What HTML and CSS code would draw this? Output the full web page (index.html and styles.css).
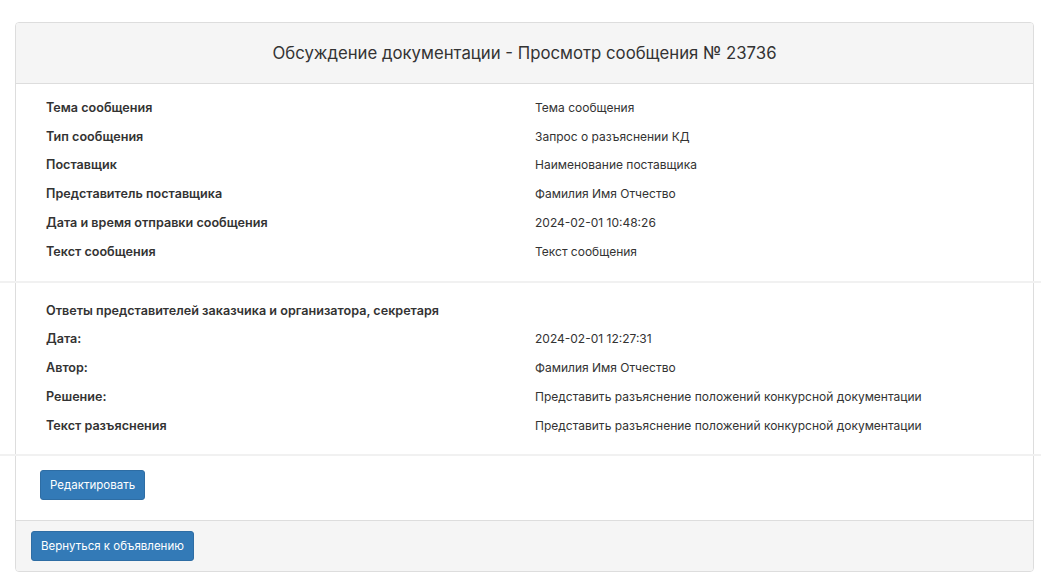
FILE: index.html
```html
<!DOCTYPE html>
<html lang="ru">
<head>
  <meta charset="UTF-8" />
  <meta name="viewport" content="width=device-width, initial-scale=1.0"/>
  <title>Просмотр сообщения № 23736</title>
  <link rel="stylesheet" href="styles.css">
</head>
<body>

  <div class="page">
    <div class="panel">
      <div class="panel-heading">
        <h3 class="panel-title">Обсуждение документации - Просмотр сообщения № 23736</h3>
      </div>

      <div class="panel-section first">
        <div class="info-row"><div class="label">Тема сообщения</div><div class="value">Тема сообщения</div></div>
        <div class="info-row"><div class="label">Тип сообщения</div><div class="value">Запрос о разъяснении КД</div></div>
        <div class="info-row"><div class="label">Поставщик</div><div class="value">Наименование поставщика</div></div>
        <div class="info-row"><div class="label">Представитель поставщика</div><div class="value">Фамилия Имя Отчество</div></div>
        <div class="info-row"><div class="label">Дата и время отправки сообщения</div><div class="value">2024-02-01 10:48:26</div></div>
        <div class="info-row"><div class="label">Текст сообщения</div><div class="value">Текст сообщения</div></div>
      </div>

      <div class="divider"></div>

      <div class="panel-section second">
        <div class="info-row"><div class="label">Ответы представителей заказчика и организатора, секретаря</div></div>
        <div class="info-row"><div class="label">Дата:</div><div class="value">2024-02-01 12:27:31</div></div>
        <div class="info-row"><div class="label">Автор:</div><div class="value">Фамилия Имя Отчество</div></div>
        <div class="info-row"><div class="label">Решение:</div><div class="value">Представить разъяснение положений конкурсной документации</div></div>
        <div class="info-row"><div class="label">Текст разъяснения</div><div class="value">Представить разъяснение положений конкурсной документации</div></div>
      </div>

      <div class="divider"></div>

      <div class="panel-actions">
        <button class="btn">Редактировать</button>
      </div>

      <div class="panel-footer">
        <button class="btn">Вернуться к объявлению</button>
      </div>
    </div>
  </div>

</body>
</html>
```

FILE: styles.css
```css
body {
  margin: 0;
  font-family: Inter, "Noto Sans", sans-serif;
  font-size: 12px;
  color: #333;
  background: #fff;
}

.page {
  padding: 22px 7px 10px 15px;
}

.panel {
  border: 1px solid #ddd;
  border-radius: 4px;
}

.panel-heading {
  background-color: #f5f5f5;
  border-bottom: 1px solid #ddd;
  border-radius: 3px 3px 0 0;
  height: 60px;
  display: flex;
  align-items: center;
  justify-content: center;
}

.panel-title {
  margin: 0;
  font-size: 16.75px;
  font-weight: 400;
  color: #333;
}

.panel-section {
  padding: 0 15px 0 30px;
}

.panel-section.first {
  padding-top: 10px;
  padding-bottom: 15px;
}

.panel-section.second {
  padding-top: 13.5px;
  padding-bottom: 13.5px;
}

.info-row {
  display: grid;
  grid-template-columns: 489px 1fr;
  line-height: 28.7px;
}

.label {
  font-size: 12.6px;
  font-weight: 600;
  white-space: nowrap;
}

.value {
  font-size: 12px;
}

.divider {
  height: 2px;
  background-color: #f1f1f1;
  margin: 0 -8px 0 -16px;
}

.panel-actions {
  padding: 14px 24px 20px;
}

.panel-footer {
  background-color: #f5f5f5;
  border-top: 1px solid #ddd;
  border-radius: 0 0 3px 3px;
  padding: 10px 15px;
}

.btn {
  display: inline-block;
  height: 30px;
  padding: 0 9px;
  font-family: inherit;
  font-size: 11.5px;
  color: #fff;
  background-color: #337ab7;
  border: 1px solid #2e6da4;
  border-radius: 3px;
  cursor: pointer;
}

.btn:hover {
  background-color: #286090;
}
```
